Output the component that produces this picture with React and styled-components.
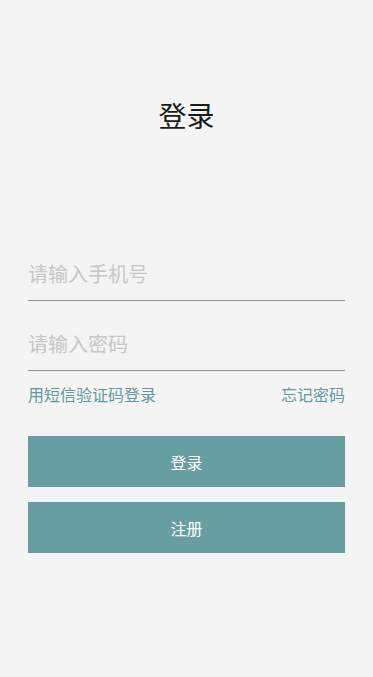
import React, { useState } from "react";
import styled, { createGlobalStyle } from "styled-components";

const GlobalStyle = createGlobalStyle`
  html, body {
    margin: 0;
    padding: 0;
    background: #f4f4f4;
  }
  body {
    font-family: "Noto Sans CJK SC", "Noto Sans", sans-serif;
  }
  * {
    box-sizing: border-box;
  }
`;

const Page = styled.div`
  min-height: 677px;
  padding: 0 28px 0 28px;
  display: flex;
  flex-direction: column;
`;

const Title = styled.h1`
  margin: 95px 0 0 0;
  height: 40px;
  line-height: 40px;
  font-size: 28px;
  font-weight: 400;
  color: #1a1a1a;
  text-align: center;
`;

const Form = styled.div`
  margin-top: 96px;
  display: flex;
  flex-direction: column;
`;

const Field = styled.div`
  height: 70px;
  display: flex;
  align-items: flex-end;
  border-bottom: 1.5px solid #939393;
`;

const Input = styled.input`
  width: 100%;
  height: 40px;
  margin-bottom: 7px;
  border: none;
  outline: none;
  background: transparent;
  padding: 0;
  font-family: inherit;
  font-size: 20px;
  color: #333;
  &::placeholder {
    color: #c6c6c6;
  }
`;

const LinkRow = styled.div`
  display: flex;
  justify-content: space-between;
  align-items: center;
  height: 50px;
  padding-bottom: 5px;
`;

const TextLink = styled.a`
  font-size: 16px;
  color: #5e9a9f;
  text-decoration: none;
  cursor: pointer;
`;

const Buttons = styled.div`
  margin-top: 15px;
  display: flex;
  flex-direction: column;
  gap: 15px;
`;

const Button = styled.button`
  height: 51px;
  width: 100%;
  border: none;
  background: #669ea2;
  color: #fff;
  font-family: inherit;
  font-size: 16px;
  cursor: pointer;
`;

export default function App() {
  const [phone, setPhone] = useState("");
  const [pwd, setPwd] = useState("");
  return (
    <>
      <GlobalStyle />
      <Page>
        <Title>登录</Title>
        <Form>
          <Field>
            <Input
              placeholder="请输入手机号"
              value={phone}
              onChange={(e) => setPhone(e.target.value)}
            />
          </Field>
          <Field>
            <Input
              type="password"
              placeholder="请输入密码"
              value={pwd}
              onChange={(e) => setPwd(e.target.value)}
            />
          </Field>
          <LinkRow>
            <TextLink>用短信验证码登录</TextLink>
            <TextLink>忘记密码</TextLink>
          </LinkRow>
          <Buttons>
            <Button>登录</Button>
            <Button>注册</Button>
          </Buttons>
        </Form>
      </Page>
    </>
  );
}
